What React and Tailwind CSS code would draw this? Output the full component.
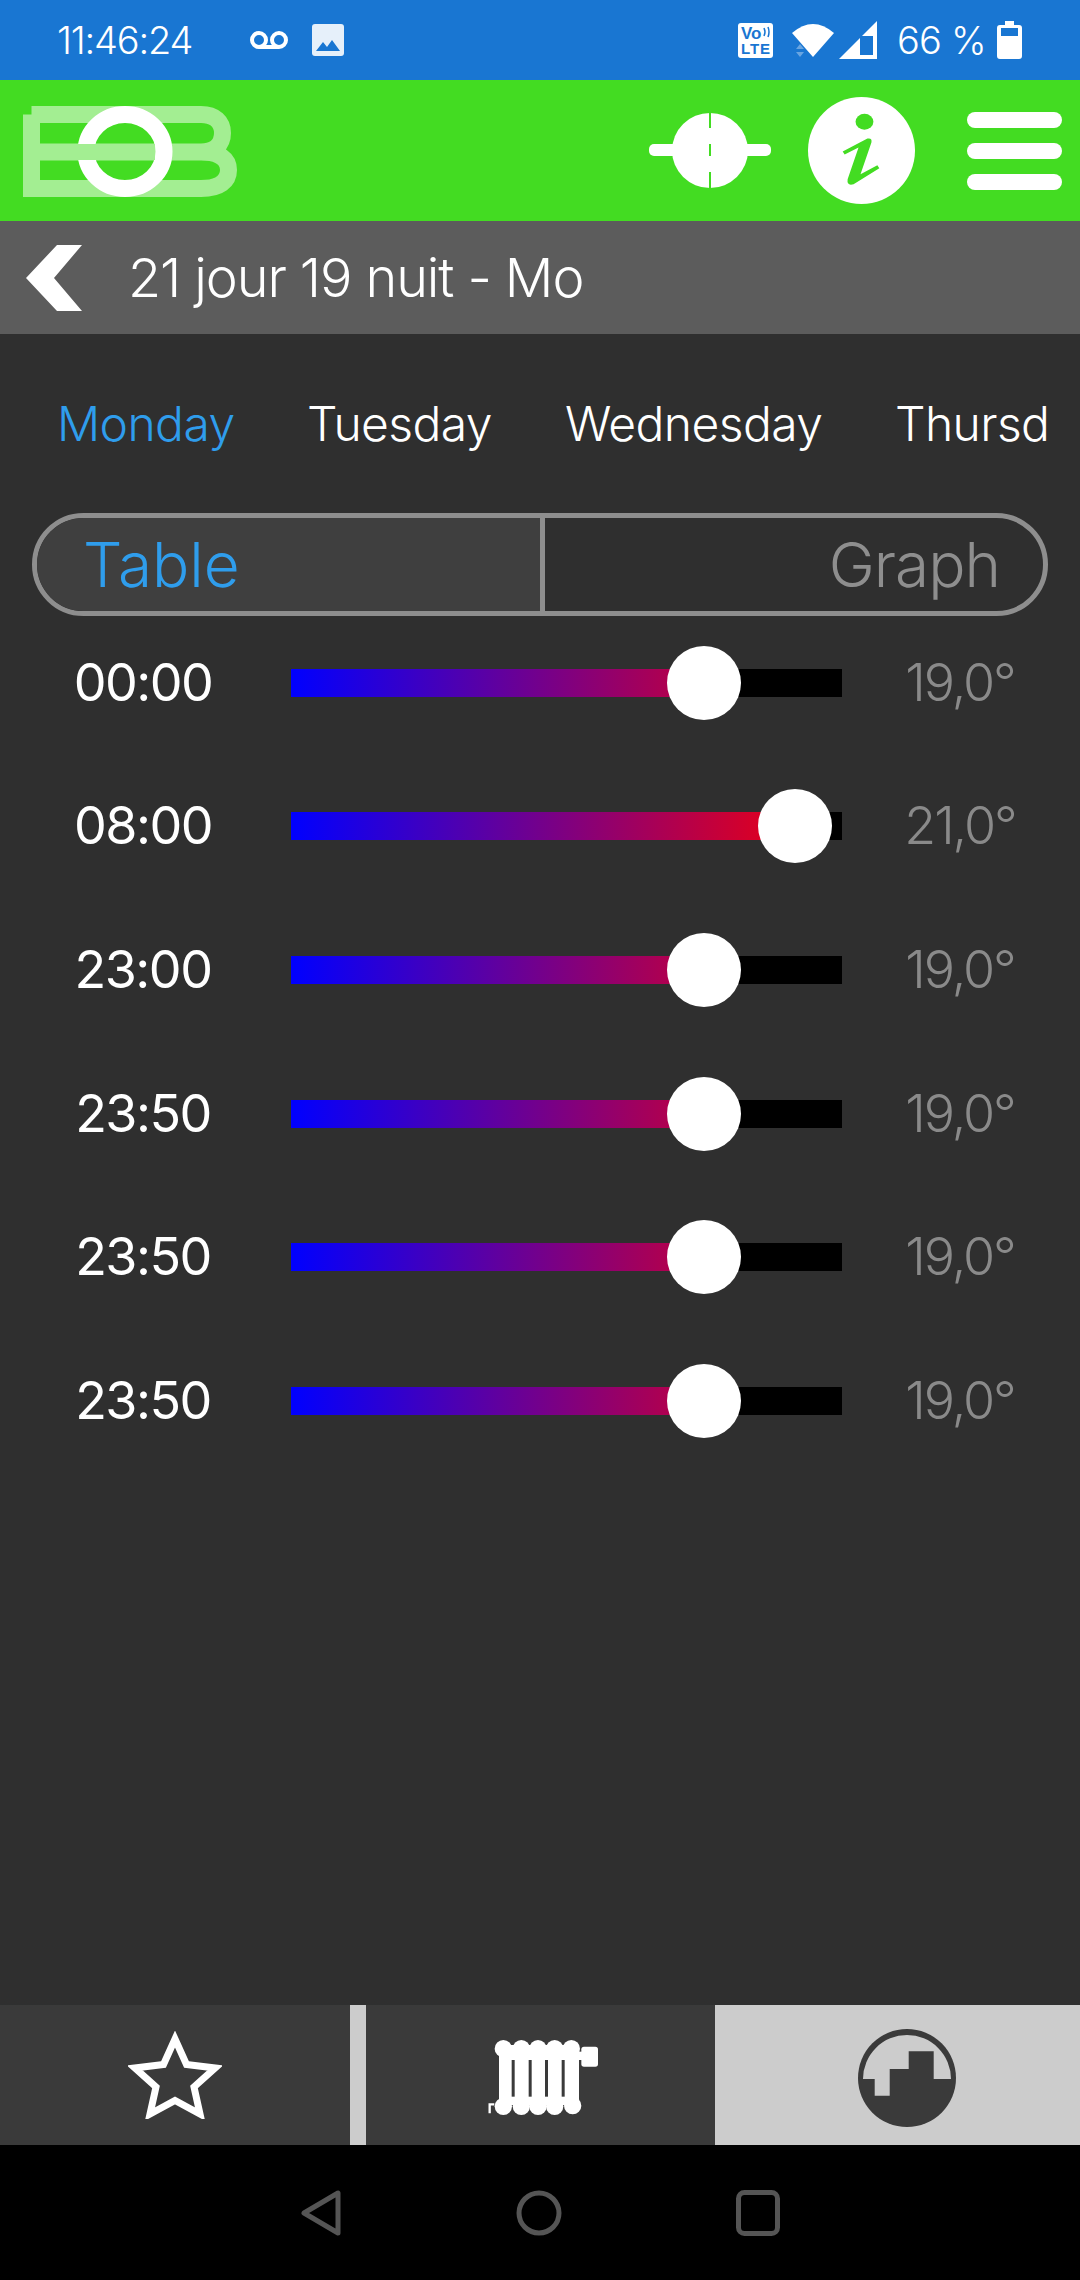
const rows = [
  { time: "00:00", value: 19, label: "19,0°" },
  { time: "08:00", value: 21, label: "21,0°" },
  { time: "23:00", value: 19, label: "19,0°" },
  { time: "23:50", value: 19, label: "19,0°" },
  { time: "23:50", value: 19, label: "19,0°" },
  { time: "23:50", value: 19, label: "19,0°" },
];

function StatusBar() {
  return (
    <div className="flex h-[80px] items-center bg-[#1976d2] pl-[57px] text-white">
      <span className="w-[193px] text-[38px] font-light tracking-[-1.2px]">11:46:24</span>
      <svg width="38" height="18" viewBox="0 0 38 18" fill="none" stroke="white" strokeWidth="4">
        <circle cx="9" cy="9" r="7" />
        <circle cx="29" cy="9" r="7" />
        <path d="M9 16h20" />
      </svg>
      <svg className="ml-[24px]" width="32" height="32" viewBox="0 0 32 32">
        <rect width="32" height="32" rx="3" fill="#e6f0fa" />
        <path d="M4 27l7-9 4 5 5-7 8 11z" fill="#1976d2" />
      </svg>
      <svg className="ml-[394px]" width="35" height="35" viewBox="0 0 35 35">
        <rect width="35" height="35" rx="3" fill="white" />
        <text x="3" y="16" fontSize="17" fontWeight="700" fill="#1976d2" fontFamily="Liberation Sans, sans-serif">Vo</text>
        <text x="3" y="31" fontSize="15" fontWeight="700" textLength="29" fill="#1976d2" fontFamily="Liberation Sans, sans-serif">LTE</text>
        <path d="M26 5q2 4 0 8M30 4q2 5 0 10" stroke="#1976d2" strokeWidth="1.5" fill="none" />
      </svg>
      <svg className="ml-[19px]" width="42" height="36" viewBox="0 0 42 36">
        <path d="M0 11Q21-7 42 11L21 35z" fill="white" />
        <path d="M4 27l4-5 4 5zM4 30l4 5 4-5z" fill="white" fillOpacity="0.35" />
      </svg>
      <svg className="ml-[5px]" width="38" height="38" viewBox="0 0 38 38">
        <path d="M38 0V38H0z" fill="white" />
        <path d="M21 15h13v19H21z" fill="#1976d2" />
      </svg>
      <span className="ml-[20px] w-[100px] text-[38px] font-light tracking-[-0.8px]">66 %</span>
      <svg width="25" height="38" viewBox="0 0 25 38">
        <path d="M8 0h9v4h5a3 3 0 0 1 3 3v28a3 3 0 0 1-3 3H3a3 3 0 0 1-3-3V7a3 3 0 0 1 3-3h5z" fill="white" />
        <rect x="4" y="7" width="17" height="8" fill="#1976d2" />
      </svg>
    </div>
  );
}

function Logo() {
  return (
    <svg className="mt-[1px]" width="216" height="91" viewBox="0 0 216 91" fill="none">
      <path
        d="M8.500 8.500H178C192 8.500 199.500 16 199.500 27S192 46 178 46H8.500M178 46C197 46 205.500 53 205.500 64S197 82.500 178 82.500H8.500V8.500"
        stroke="#a3ee92"
        strokeWidth="17"
      />
      <ellipse cx="102" cy="45.500" rx="39" ry="37" stroke="white" strokeWidth="17" />
      {/* the bar runs back over the left side of the ring */}
      <path d="M40 46H132" stroke="#a3ee92" strokeWidth="16" />
    </svg>
  );
}

function HeaderBar() {
  return (
    <div className="flex h-[141px] items-center bg-[#43dc22] pl-[23px]">
      <Logo />
      <svg className="ml-[410px]" width="122" height="75" viewBox="0 0 122 75">
        <rect x="0" y="31" width="122" height="12" rx="5" fill="white" />
        <ellipse cx="61" cy="37.500" rx="38" ry="37.500" fill="white" />
        <path d="M61 0v15M61 31v12M61 59v16" stroke="#43dc22" strokeWidth="2" />
      </svg>
      <svg className="ml-[37px]" width="107" height="107" viewBox="0 0 108 108">
        <circle cx="54" cy="54" r="54" fill="white" />
        <ellipse cx="57" cy="25" rx="9" ry="8" fill="#43dc22" />
        <path
          d="M35 55l25-13q5-1 4 4l-11 32 17-9 2 3-26 16q-7 2-6-5l11-32-14 7z"
          fill="#43dc22"
        />
      </svg>
      <div className="ml-[52px] flex w-[95px] flex-col gap-[15px]">
        <div className="h-[16px] rounded-full bg-white" />
        <div className="h-[16px] rounded-full bg-white" />
        <div className="h-[16px] rounded-full bg-white" />
      </div>
    </div>
  );
}

function TitleBar() {
  return (
    <div className="flex h-[113px] items-center bg-[#5c5c5c] pl-[26px] text-white">
      <svg width="56" height="66" viewBox="0 0 56 66">
        <path d="M56 0H31L0 33l31 33h25L28 33z" fill="white" />
      </svg>
      <span className="ml-[46px] text-[54px] font-light tracking-[-1.100px]">21 jour 19 nuit - Mo</span>
    </div>
  );
}

function DayTabs() {
  return (
    <div className="flex h-[124px] items-center overflow-hidden pt-[5px] pl-[57px] text-[48px] font-light tracking-[-0.6px] whitespace-nowrap text-white">
      <span className="w-[250px] text-[#2f9dec]">Monday</span>
      <span className="w-[258px]">Tuesday</span>
      <span className="w-[330px]">Wednesday</span>
      <span>Thursd</span>
    </div>
  );
}

function ViewSwitch() {
  return (
    <div className="mx-[32px] flex h-[103px] overflow-hidden rounded-[52px] border-[5px] border-[#8e8e8e] text-[62px] font-light">
      <div className="flex w-[503px] items-center bg-[#3f3f3f] pl-[46px] text-[#2f9dec]">Table</div>
      <div className="flex flex-1 items-center justify-end border-l-[5px] border-[#8e8e8e] pr-[43px] tracking-[-1px] text-[#8e8e8e]">Graph</div>
    </div>
  );
}

function SetpointRow({ time, value, label }) {
  // 19 deg sits 412px along the track, each extra degree adds about 45px
  const thumb = 412.5 + (value - 19) * 45.5;
  return (
    <div className="flex h-[143.6px] items-center">
      <span className="w-[291px] pr-[5px] text-center text-[52px] font-normal tracking-[-1.500px] text-white">{time}</span>
      <div className="relative h-[28px] w-[551px] bg-black">
        <div
          className="h-full bg-[linear-gradient(to_right,#0000ff,#ff0000)] bg-no-repeat"
          style={{ width: thumb, backgroundSize: "551px 100%" }}
        />
        <div
          className="absolute top-[-23px] h-[74px] w-[74px] -translate-x-1/2 rounded-full bg-white"
          style={{ left: thumb }}
        />
      </div>
      <span className="flex-1 pr-[2px] text-center text-[52px] font-light tracking-[-2px] text-[#8a8a8a]">{label}</span>
    </div>
  );
}

function BottomTabs() {
  return (
    <div className="flex h-[140px] bg-[#cccccc]">
      <div className="flex w-[350px] items-center justify-center bg-[#3a3a3a]">
        <svg width="94" height="88" viewBox="0 0 94 88" fill="none">
          <path
            d="M47 8l11.500 25.500 28.500 3.500-21 19 6 27L47 69.500 22 83l6-27-21-19 28.500-3.500z"
            stroke="white"
            strokeWidth="7"
          />
        </svg>
      </div>
      <div className="ml-[16px] flex w-[349px] items-center justify-center bg-[#3a3a3a] pt-[5px] pl-[5px]">
        <svg width="110" height="75" viewBox="85 115 330 225">
          <g fill="white">
            <circle cx="131" cy="141" r="26" />
            <circle cx="185" cy="141" r="26" />
            <circle cx="235" cy="141" r="26" />
            <circle cx="285" cy="141" r="26" />
            <circle cx="335" cy="141" r="26" />
            <rect x="118" y="130" width="240" height="180" />
            <circle cx="131" cy="314" r="26" />
            <circle cx="185" cy="314" r="26" />
            <circle cx="235" cy="314" r="26" />
            <circle cx="285" cy="314" r="26" />
            <circle cx="339" cy="312" r="26" />
            <rect x="355" y="150" width="20" height="25" />
            <rect x="365" y="135" width="50" height="60" rx="8" />
          </g>
          <g fill="#3a3a3a">
            <rect x="156" y="175" width="9" height="110" />
            <rect x="207" y="175" width="9" height="110" />
            <rect x="256" y="175" width="9" height="110" />
            <rect x="306" y="175" width="9" height="110" />
          </g>
          <path d="M90 335V308H104" stroke="white" strokeWidth="7" fill="none" />
        </svg>
      </div>
      <div className="flex flex-1 items-center justify-center pt-[5px] pl-[19px]">
        <svg width="100" height="100" viewBox="0 0 100 100">
          <circle cx="50" cy="50" r="49" fill="#3a3a3a" />
          <path
            d="M6 51A44 44 0 0 1 94 51H76.700V23.300H51.700V41H32.700V67.700H17.700V51z"
            fill="#cccccc"
          />
        </svg>
      </div>
    </div>
  );
}

function NavBar() {
  return (
    <div className="flex h-[135px] items-center justify-center gap-[174px] bg-black">
      <svg width="42" height="48" viewBox="0 0 42 48" fill="none" stroke="#555555" strokeWidth="5" strokeLinejoin="round">
        <path d="M38 4V44L4 24z" />
      </svg>
      <svg width="46" height="46" viewBox="0 0 46 46" fill="none" stroke="#555555" strokeWidth="5">
        <circle cx="23" cy="23" r="20" />
      </svg>
      <svg width="44" height="46" viewBox="0 0 44 46" fill="none" stroke="#555555" strokeWidth="5">
        <rect x="2.500" y="2.500" width="39" height="41" rx="6" />
      </svg>
    </div>
  );
}

export default function App() {
  return (
    <div className="flex h-[2280px] w-[1080px] flex-col overflow-hidden bg-[#2f2f2f] font-['Inter','Liberation_Sans',sans-serif]">
      <StatusBar />
      <HeaderBar />
      <TitleBar />
      <main className="flex-1 pt-[25px]">
        <DayTabs />
        <div className="mt-[30px]">
          <ViewSwitch />
        </div>
        <div className="mt-[-5px]">
          {rows.map((row, i) => (
            <SetpointRow key={i} {...row} />
          ))}
        </div>
      </main>
      <BottomTabs />
      <NavBar />
    </div>
  );
}
